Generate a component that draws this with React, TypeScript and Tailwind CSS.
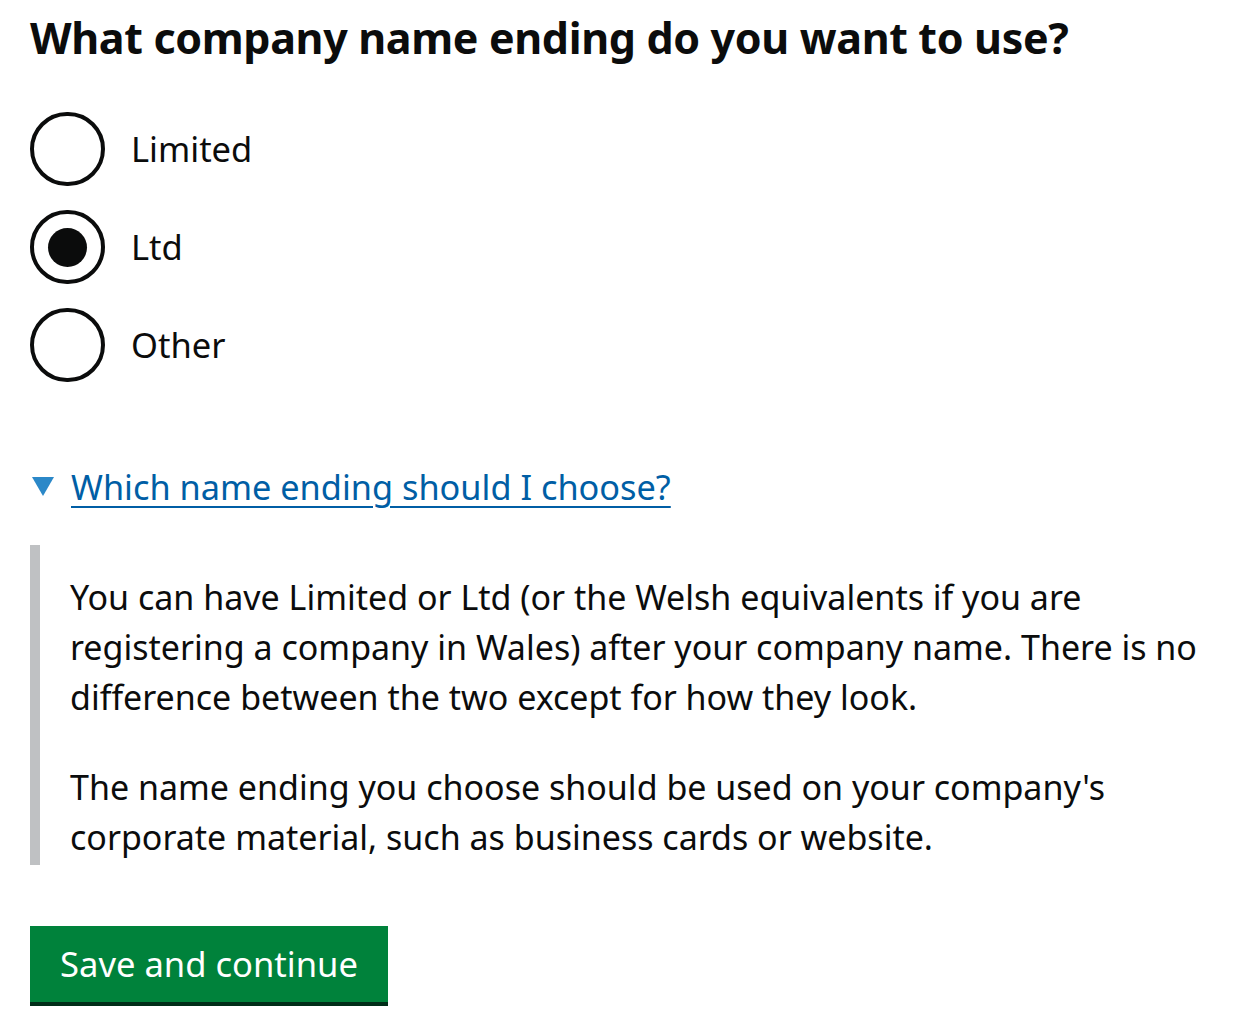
const OPTIONS = [
  { label: "Limited", checked: false },
  { label: "Ltd", checked: true },
  { label: "Other", checked: false },
];

export default function App() {
  return (
    <div className="min-h-screen bg-white text-[#0b0c0c] font-['Noto_Sans',sans-serif] pl-[30px] pt-[11px]">
      <h1 className="text-[43px] leading-[54px] font-bold tracking-[-0.35px]">
        What company name ending do you want to use?
      </h1>

      <div className="mt-[47px] flex flex-col gap-[24px]">
        {OPTIONS.map((o) => (
          <label key={o.label} className="flex items-center gap-[26px] h-[74px]">
            <span className="w-[75px] h-[74px] rounded-full border-[4.5px] border-[#0b0c0c] flex items-center justify-center shrink-0">
              {o.checked && <span className="w-[39px] h-[39px] rounded-full bg-[#0b0c0c]" />}
            </span>
            <span className="text-[34.5px] leading-none">{o.label}</span>
          </label>
        ))}
      </div>

      {/* details / summary */}
      <div className="mt-[80px] flex items-center gap-[17px]">
        <svg width="22" height="20" viewBox="0 0 22 20" className="ml-[2px]">
          <polygon points="0,0 22,0 11,19" fill="#2b88c8" />
        </svg>
        <span className="text-[34.3px] leading-[50px] text-[#005ea5] underline underline-offset-[6px] decoration-[2px]">
          Which name ending should I choose?
        </span>
      </div>

      <div className="mt-[33px] border-l-[10px] border-[#bfc1c3] pl-[30px] pt-[27px] pb-[3px] w-[1210px] text-[34px] leading-[50px]">
        <p>
          You can have Limited or Ltd (or the Welsh equivalents if you are registering a company in Wales)
          after your company name. There is no difference between the two except for how they look.
        </p>
        <p className="mt-[40px]">
          The name ending you choose should be used on your company's corporate material, such as business cards
          or website.
        </p>
      </div>

      <button className="mt-[61px] bg-[#00823b] text-white text-[34.6px] leading-none px-[30px] h-[76px] shadow-[0_4px_0_#002d18]">
        Save and continue
      </button>
    </div>
  );
}
